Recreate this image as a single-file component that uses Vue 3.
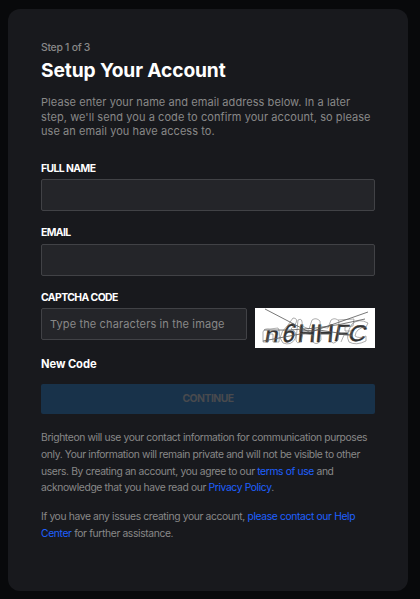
<template>
  <main class="page">
    <section class="card">
      <header class="card-header">
        <span class="step">Step {{ step }} of {{ totalSteps }}</span>
        <h1 class="title">Setup Your Account</h1>
        <p class="intro">
          Please enter your name and email address below. In a later step, we'll send you a code to
          confirm your account, so please use an email you have access to.
        </p>
      </header>

      <form class="form" @submit.prevent="handleSubmit">
        <div class="field">
          <label class="label" for="name">FULL NAME</label>
          <input id="name" v-model="form.name" class="input" type="text" />
        </div>

        <div class="field field-email">
          <label class="label" for="email">EMAIL</label>
          <input id="email" v-model="form.email" class="input" type="email" />
        </div>

        <div class="field field-captcha">
          <label class="label" for="captcha">CAPTCHA CODE</label>
          <div class="captcha-row">
            <input
              id="captcha"
              v-model="form.captcha"
              class="input"
              type="text"
              placeholder="Type the characters in the image"
            />
            <svg class="captcha" width="120" height="40" viewBox="0 0 120 40">
              <rect width="120" height="40" fill="#fff" />
              <g class="captcha-ink">
                <text
                  v-for="(glyph, i) in glyphs"
                  :key="i"
                  :transform="`translate(${glyph.x} ${glyph.y}) scale(${glyph.sx} ${glyph.sy}) skewX(${glyph.skew})`"
                >{{ glyph.char }}</text>
              </g>
              <g class="captcha-ghost">
                <path d="M8 34V24Q9 20 15 21L23 20Q25 22 24 34H18V26H13V34Z" />
                <path d="M25 30Q26 23 33 17L38 10Q43 10 41 15L36 21Q43 24 40 31Q36 38 28 35Z" />
                <path d="M43 12Q48 9 47 18L54 21 57 12Q61 9 65 13L66 32Q62 38 58 34V27L48 25 46 33Q42 37 41 32Z" />
                <path d="M64 19 73 20 76 12Q80 9 84 13L83 32Q78 38 75 32V26L65 26" />
                <path d="M83 12 99 11 98 18 90 19V23H97V28L89 27 86 34" />
                <path d="M113 15Q104 10 97 16Q90 27 94 34Q101 38 111 33V28Q104 31 100 28Q101 20 111 19Z" />
              </g>
              <g class="captcha-lines">
                <path d="M10 1 56 25" />
                <path d="M113 4 56 24 8 33" />
                <path d="M9 22Q58 24 110 11" />
                <path d="M44 23 64 22 96 27" />
              </g>
            </svg>
          </div>
        </div>

        <button class="new-code" type="button" @click="form.captcha = ''">New Code</button>
        <button class="submit" type="submit" :disabled="!canContinue">CONTINUE</button>
      </form>

      <footer class="legal">
        <p>
          Brighteon will use your contact information for communication purposes only. Your
          information will remain private and will not be visible to other users. By creating an
          account, you agree to our <a href="#">terms of use</a> and acknowledge that you have read
          our <a href="#">Privacy Policy</a>.
        </p>
        <p>
          If you have any issues creating your account, <a href="#">please contact our Help Center</a>
          for further assistance.
        </p>
      </footer>
    </section>
  </main>
</template>

<script setup>
import { computed, reactive } from 'vue'

const step = 1
const totalSteps = 3

const form = reactive({
  name: '',
  email: '',
  captcha: ''
})

const glyphs = [
  { char: 'n', x: 9, y: 34, sx: 1.4, sy: 1.2, skew: -8 },
  { char: '6', x: 26, y: 34, sx: 1.25, sy: 1.45, skew: -16 },
  { char: 'H', x: 42, y: 34, sx: 1.4, sy: 1.4, skew: -5 },
  { char: 'H', x: 60, y: 34, sx: 1.4, sy: 1.4, skew: -5 },
  { char: 'F', x: 78, y: 33, sx: 1.3, sy: 1.3, skew: -12 },
  { char: 'C', x: 92, y: 33, sx: 1.35, sy: 1.25, skew: -14 }
]

const canContinue = computed(() => Boolean(form.name && form.email && form.captcha))

const handleSubmit = () => {
  if (!canContinue.value) return
  form.captcha = ''
}
</script>

<style>
body {
  background: #08090b;
}
</style>

<style scoped>
.page {
  box-sizing: border-box;
  height: 599px;
  padding: 9px 12px 8px 8px;
  background: #08090b;
  font-family: Inter, 'Liberation Sans', sans-serif;
}

.card {
  box-sizing: border-box;
  height: 582px;
  padding: 32px 33px;
  border-radius: 12px;
  background: #18191d;
  color: #888;
}

.step {
  display: block;
  font-size: 10.4px;
  line-height: 13px;
  font-weight: 500;
  letter-spacing: -0.27px;
}

.title {
  margin: 3px 0 0;
  color: #fff;
  font-size: 19.2px;
  line-height: 26px;
  font-weight: 700;
  letter-spacing: -0.12px;
}

.intro {
  margin: 12px 0 0;
  font-size: 11px;
  line-height: 14.6px;
  letter-spacing: 0.07px;
}

.form {
  display: flex;
  flex-direction: column;
  margin-top: 23px;
}

.field {
  display: flex;
  flex-direction: column;
  gap: 4px;
  margin-bottom: 15px;
}

.field-email {
  gap: 5px;
}

.label {
  color: #fff;
  font-size: 10.4px;
  line-height: 13px;
  font-weight: 700;
  letter-spacing: -0.58px;
}

.input {
  box-sizing: border-box;
  width: 100%;
  min-width: 0;
  height: 32px;
  padding: 0 8px;
  border: 1px solid #414246;
  border-radius: 2px;
  outline: none;
  background: #242529;
  color: #fff;
  font-family: inherit;
  font-size: 11px;
  letter-spacing: 0.13px;
}

.input::placeholder {
  color: #888;
  opacity: 1;
}

.input:focus {
  border-color: #1f69ff;
}

.captcha-row {
  display: flex;
  align-items: flex-start;
  gap: 8px;
}

.captcha {
  flex-shrink: 0;
}

.captcha text {
  font-family: 'Liberation Sans', sans-serif;
  font-size: 18px;
}

.captcha-ghost {
  fill: none;
  stroke: #777;
  stroke-width: 0.6;
}

.captcha-ink {
  fill: #333;
  stroke: #333;
  stroke-width: 0.3;
}

.captcha-lines {
  fill: none;
  stroke: #555;
  stroke-width: 0.8;
}

.field-captcha {
  margin-bottom: 8px;
}

.new-code {
  align-self: flex-start;
  padding: 0;
  border: none;
  background: transparent;
  color: #fff;
  font-family: inherit;
  font-size: 11.2px;
  line-height: 16px;
  font-weight: 700;
  letter-spacing: -0.07px;
  cursor: pointer;
}

.submit {
  height: 30px;
  margin-top: 12px;
  padding: 0;
  border: none;
  border-radius: 2px;
  background: #2187e7;
  color: #fff;
  font-family: inherit;
  font-size: 10.4px;
  font-weight: 700;
  letter-spacing: -0.52px;
  cursor: pointer;
}

.submit:disabled {
  background: #18324a;
  color: #484a4e;
  cursor: default;
}

.legal {
  margin-top: 15.4px;
  font-size: 10.3px;
  line-height: 16.7px;
  letter-spacing: -0.36px;
}

.legal p {
  margin: 0 0 12.4px;
}

.legal a {
  color: #1f60ff;
  text-decoration: none;
}
</style>
